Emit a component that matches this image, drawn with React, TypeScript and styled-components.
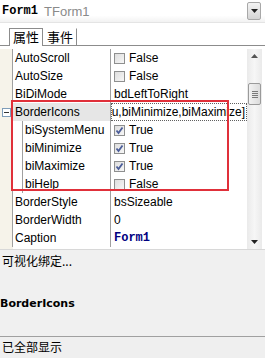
import React from 'react';
import styled, { createGlobalStyle } from 'styled-components';

const GlobalStyle = createGlobalStyle`
  html, body {
    margin: 0;
    padding: 0;
    width: 265px;
    height: 358px;
    overflow: hidden;
    background: #f0f0f0;
  }
`;

const sans = `"Liberation Sans", "Noto Sans CJK SC", sans-serif`;
const cjk = `"Noto Sans CJK SC", "Liberation Sans", sans-serif`;
const mono = `"Liberation Mono", "DejaVu Sans Mono", monospace`;

const Inspector = styled.div`
  width: 265px;
  height: 358px;
  display: flex;
  flex-direction: column;
  background: #f0f0f0;
  position: relative;
`;

const Header = styled.div`
  height: 23px;
  display: flex;
  align-items: center;
  padding: 0 4px 0 2px;
  background: linear-gradient(#ffffff, #ffffff 70%, #f2f2f2);
  border-bottom: 1px solid #e4e4e4;
  box-sizing: border-box;
`;

const ObjName = styled.span`
  font-family: ${mono};
  font-weight: bold;
  font-size: 12px;
  color: #000;
`;

const ObjType = styled.span`
  font-family: ${sans};
  font-size: 13px;
  color: #8a8a8a;
  margin-left: 6px;
  flex: 1;
`;

const DropButton = styled.div`
  width: 12px;
  height: 16px;
  border: 1px solid #a8a8a8;
  border-radius: 2px;
  background: linear-gradient(#f4f4f4, #d4d4d4);
  display: flex;
  align-items: center;
  justify-content: center;
`;

const TabBar = styled.div`
  height: 22px;
  display: flex;
  align-items: flex-end;
  padding-left: 9px;
  background: #ffffff;
  border-bottom: 1px solid #8c8c8c;
`;

const Tab = styled.div<{ $active?: boolean }>`
  height: ${p => (p.$active ? '17px' : '16px')};
  padding: 0 3px;
  font-family: ${cjk};
  font-size: 13px;
  line-height: 16px;
  color: #000;
  background: #ffffff;
  border: 1px solid ${p => (p.$active ? '#8c8c8c' : 'transparent')};
  border-right-color: #8c8c8c;
  border-bottom: none;
  margin-bottom: ${p => (p.$active ? '-1px' : '0')};
`;

const GridArea = styled.div`
  height: 203px;
  display: flex;
  background: #ffffff;
  padding-top: 3px;
  box-sizing: border-box;
  position: relative;
`;

const Rows = styled.div`
  flex: 1;
  display: flex;
  flex-direction: column;
  background: linear-gradient(90deg, #f6f3ea 0, #f6f3ea 13px, #ffffff 13px);
`;

const Row = styled.div`
  height: 18px;
  display: grid;
  grid-template-columns: 13px 98px minmax(0, 1fr);
`;

const Gutter = styled.div`
  display: flex;
  align-items: center;
  justify-content: center;
  border-right: 1px solid #a0a0a0;
`;

const NameCell = styled.div<{ $sub?: boolean; $selected?: boolean }>`
  font-family: ${sans};
  font-size: 12px;
  line-height: 18px;
  color: #000;
  white-space: nowrap;
  overflow: hidden;
  border-right: 1px solid #a0a0a0;
  padding-left: ${p => (p.$sub ? '12px' : '2px')};
  background: ${p => (p.$selected ? '#e6e6e6' : 'transparent')};
  position: relative;
  &::before {
    content: '';
    display: ${p => (p.$sub ? 'block' : 'none')};
    position: absolute;
    left: 9px;
    top: 0;
    bottom: 0;
    border-left: 1px solid #a0a0a0;
  }
`;

const ValueCell = styled.div<{ $focus?: boolean; $bold?: boolean }>`
  font-family: ${p => (p.$bold ? mono : sans)};
  font-weight: ${p => (p.$bold ? 'bold' : 'normal')};
  font-size: 12px;
  line-height: 16px;
  color: ${p => (p.$bold ? '#000080' : '#000')};
  white-space: nowrap;
  overflow: hidden;
  display: flex;
  align-items: center;
  justify-content: ${p => (p.$focus ? 'flex-end' : 'flex-start')};
  padding: 0 1px 0 2px;
  border: 1px dotted ${p => (p.$focus ? '#606060' : 'transparent')};
`;

const ValueText = styled.span`
  flex: none;
`;

const CheckText = styled.span`
  margin-left: 4px;
`;

const ExpandBox = styled.div`
  width: 7px;
  height: 7px;
  border: 1px solid #7f9db9;
  background: #ffffff;
  display: flex;
  align-items: center;
  justify-content: center;
  &::after {
    content: '';
    width: 5px;
    height: 1px;
    background: #333;
  }
`;

const Scrollbar = styled.div`
  width: 15px;
  margin-right: 3px;
  display: flex;
  flex-direction: column;
  align-items: center;
  background: linear-gradient(90deg, #eaeaea, #f6f6f6 50%, #eaeaea);
`;

const ScrollArrow = styled.div`
  height: 14px;
  display: flex;
  align-items: center;
  justify-content: center;
`;

const ScrollTrack = styled.div`
  flex: 1;
  width: 100%;
  padding-top: 20px;
  box-sizing: border-box;
  display: flex;
  justify-content: center;
`;

const Thumb = styled.div`
  width: 13px;
  height: 22px;
  border: 1px solid #9a9a9a;
  border-radius: 2px;
  background: linear-gradient(90deg, #f2f2f2, #dcdcdc);
  display: flex;
  flex-direction: column;
  align-items: center;
  justify-content: center;
  gap: 1px;
  box-sizing: border-box;
`;

const Grip = styled.div`
  width: 6px;
  height: 1px;
  background: #7a7a7a;
`;

const Highlight = styled.div`
  position: absolute;
  left: 11px;
  top: 54px;
  width: 218px;
  height: 91px;
  border: 2px solid #e0303a;
  box-sizing: border-box;
  pointer-events: none;
`;

const BottomPanel = styled.div`
  flex: 1;
  display: flex;
  flex-direction: column;
  border-top: 1px solid #d8d8d8;
`;

const BindLink = styled.div`
  font-family: ${cjk};
  font-size: 12px;
  line-height: 16px;
  color: #000;
  padding: 3px 0 0 2px;
`;

const PropTitle = styled.div`
  font-family: "DejaVu Sans", ${sans};
  font-weight: bold;
  font-size: 11px;
  color: #000;
  margin-top: 28px;
`;

const StatusBar = styled.div`
  height: 21px;
  border-top: 1px solid #a0a0a0;
  font-family: ${cjk};
  font-size: 12px;
  line-height: 20px;
  padding-left: 2px;
  color: #000;
  background: #efefef;
`;

const Check = ({ checked }: { checked: boolean }) => (
  <svg width="11" height="11" viewBox="0 0 11 11">
    <defs>
      <linearGradient id="cb" x1="0" y1="0" x2="1" y2="1">
        <stop offset="0" stopColor="#dcdcdc" />
        <stop offset="1" stopColor="#f8f8f8" />
      </linearGradient>
    </defs>
    <rect x="0.5" y="0.5" width="10" height="10" fill="url(#cb)" stroke="#8e8f8f" />
    {checked && (
      <path d="M2.5 5.5 L4.5 8 L8.5 2.5" fill="none" stroke="#4b5d99" strokeWidth="1.8" />
    )}
  </svg>
);

type Prop = {
  name: string;
  value?: string;
  check?: boolean;
  sub?: boolean;
  expand?: boolean;
  selected?: boolean;
  bold?: boolean;
};

const props: Prop[] = [
  { name: 'AutoScroll', check: false },
  { name: 'AutoSize', check: false },
  { name: 'BiDiMode', value: 'bdLeftToRight' },
  { name: 'BorderIcons', value: '[biSystemMenu,biMinimize,biMaximize]', expand: true, selected: true },
  { name: 'biSystemMenu', check: true, sub: true },
  { name: 'biMinimize', check: true, sub: true },
  { name: 'biMaximize', check: true, sub: true },
  { name: 'biHelp', check: false, sub: true },
  { name: 'BorderStyle', value: 'bsSizeable' },
  { name: 'BorderWidth', value: '0' },
  { name: 'Caption', value: 'Form1', bold: true },
];

export default function App() {
  return (
    <Inspector>
      <GlobalStyle />
      <Header>
        <ObjName>Form1</ObjName>
        <ObjType>TForm1</ObjType>
        <DropButton>
          <svg width="7" height="4" viewBox="0 0 7 4">
            <path d="M0 0 H7 L3.5 4 Z" fill="#222" />
          </svg>
        </DropButton>
      </Header>
      <TabBar>
        <Tab $active>属性</Tab>
        <Tab>事件</Tab>
      </TabBar>
      <GridArea>
        <Rows>
          {props.map(p => (
            <Row key={p.name}>
              <Gutter>{p.expand && <ExpandBox />}</Gutter>
              <NameCell $sub={p.sub} $selected={p.selected}>{p.name}</NameCell>
              <ValueCell $focus={p.selected} $bold={p.bold}>
                {p.check !== undefined ? (
                  <>
                    <Check checked={p.check} />
                    <CheckText>{p.check ? 'True' : 'False'}</CheckText>
                  </>
                ) : (
                  <ValueText>{p.value}</ValueText>
                )}
              </ValueCell>
            </Row>
          ))}
        </Rows>
        <Scrollbar>
          <ScrollArrow>
            <svg width="7" height="4" viewBox="0 0 7 4">
              <path d="M0 4 H7 L3.5 0 Z" fill="#555" />
            </svg>
          </ScrollArrow>
          <ScrollTrack>
            <Thumb>
              <Grip />
              <Grip />
              <Grip />
              <Grip />
            </Thumb>
          </ScrollTrack>
          <ScrollArrow>
            <svg width="7" height="4" viewBox="0 0 7 4">
              <path d="M0 0 H7 L3.5 4 Z" fill="#222" />
            </svg>
          </ScrollArrow>
        </Scrollbar>
        <Highlight />
      </GridArea>
      <BottomPanel>
        <BindLink>可视化绑定...</BindLink>
        <PropTitle>BorderIcons</PropTitle>
      </BottomPanel>
      <StatusBar>已全部显示</StatusBar>
    </Inspector>
  );
}
